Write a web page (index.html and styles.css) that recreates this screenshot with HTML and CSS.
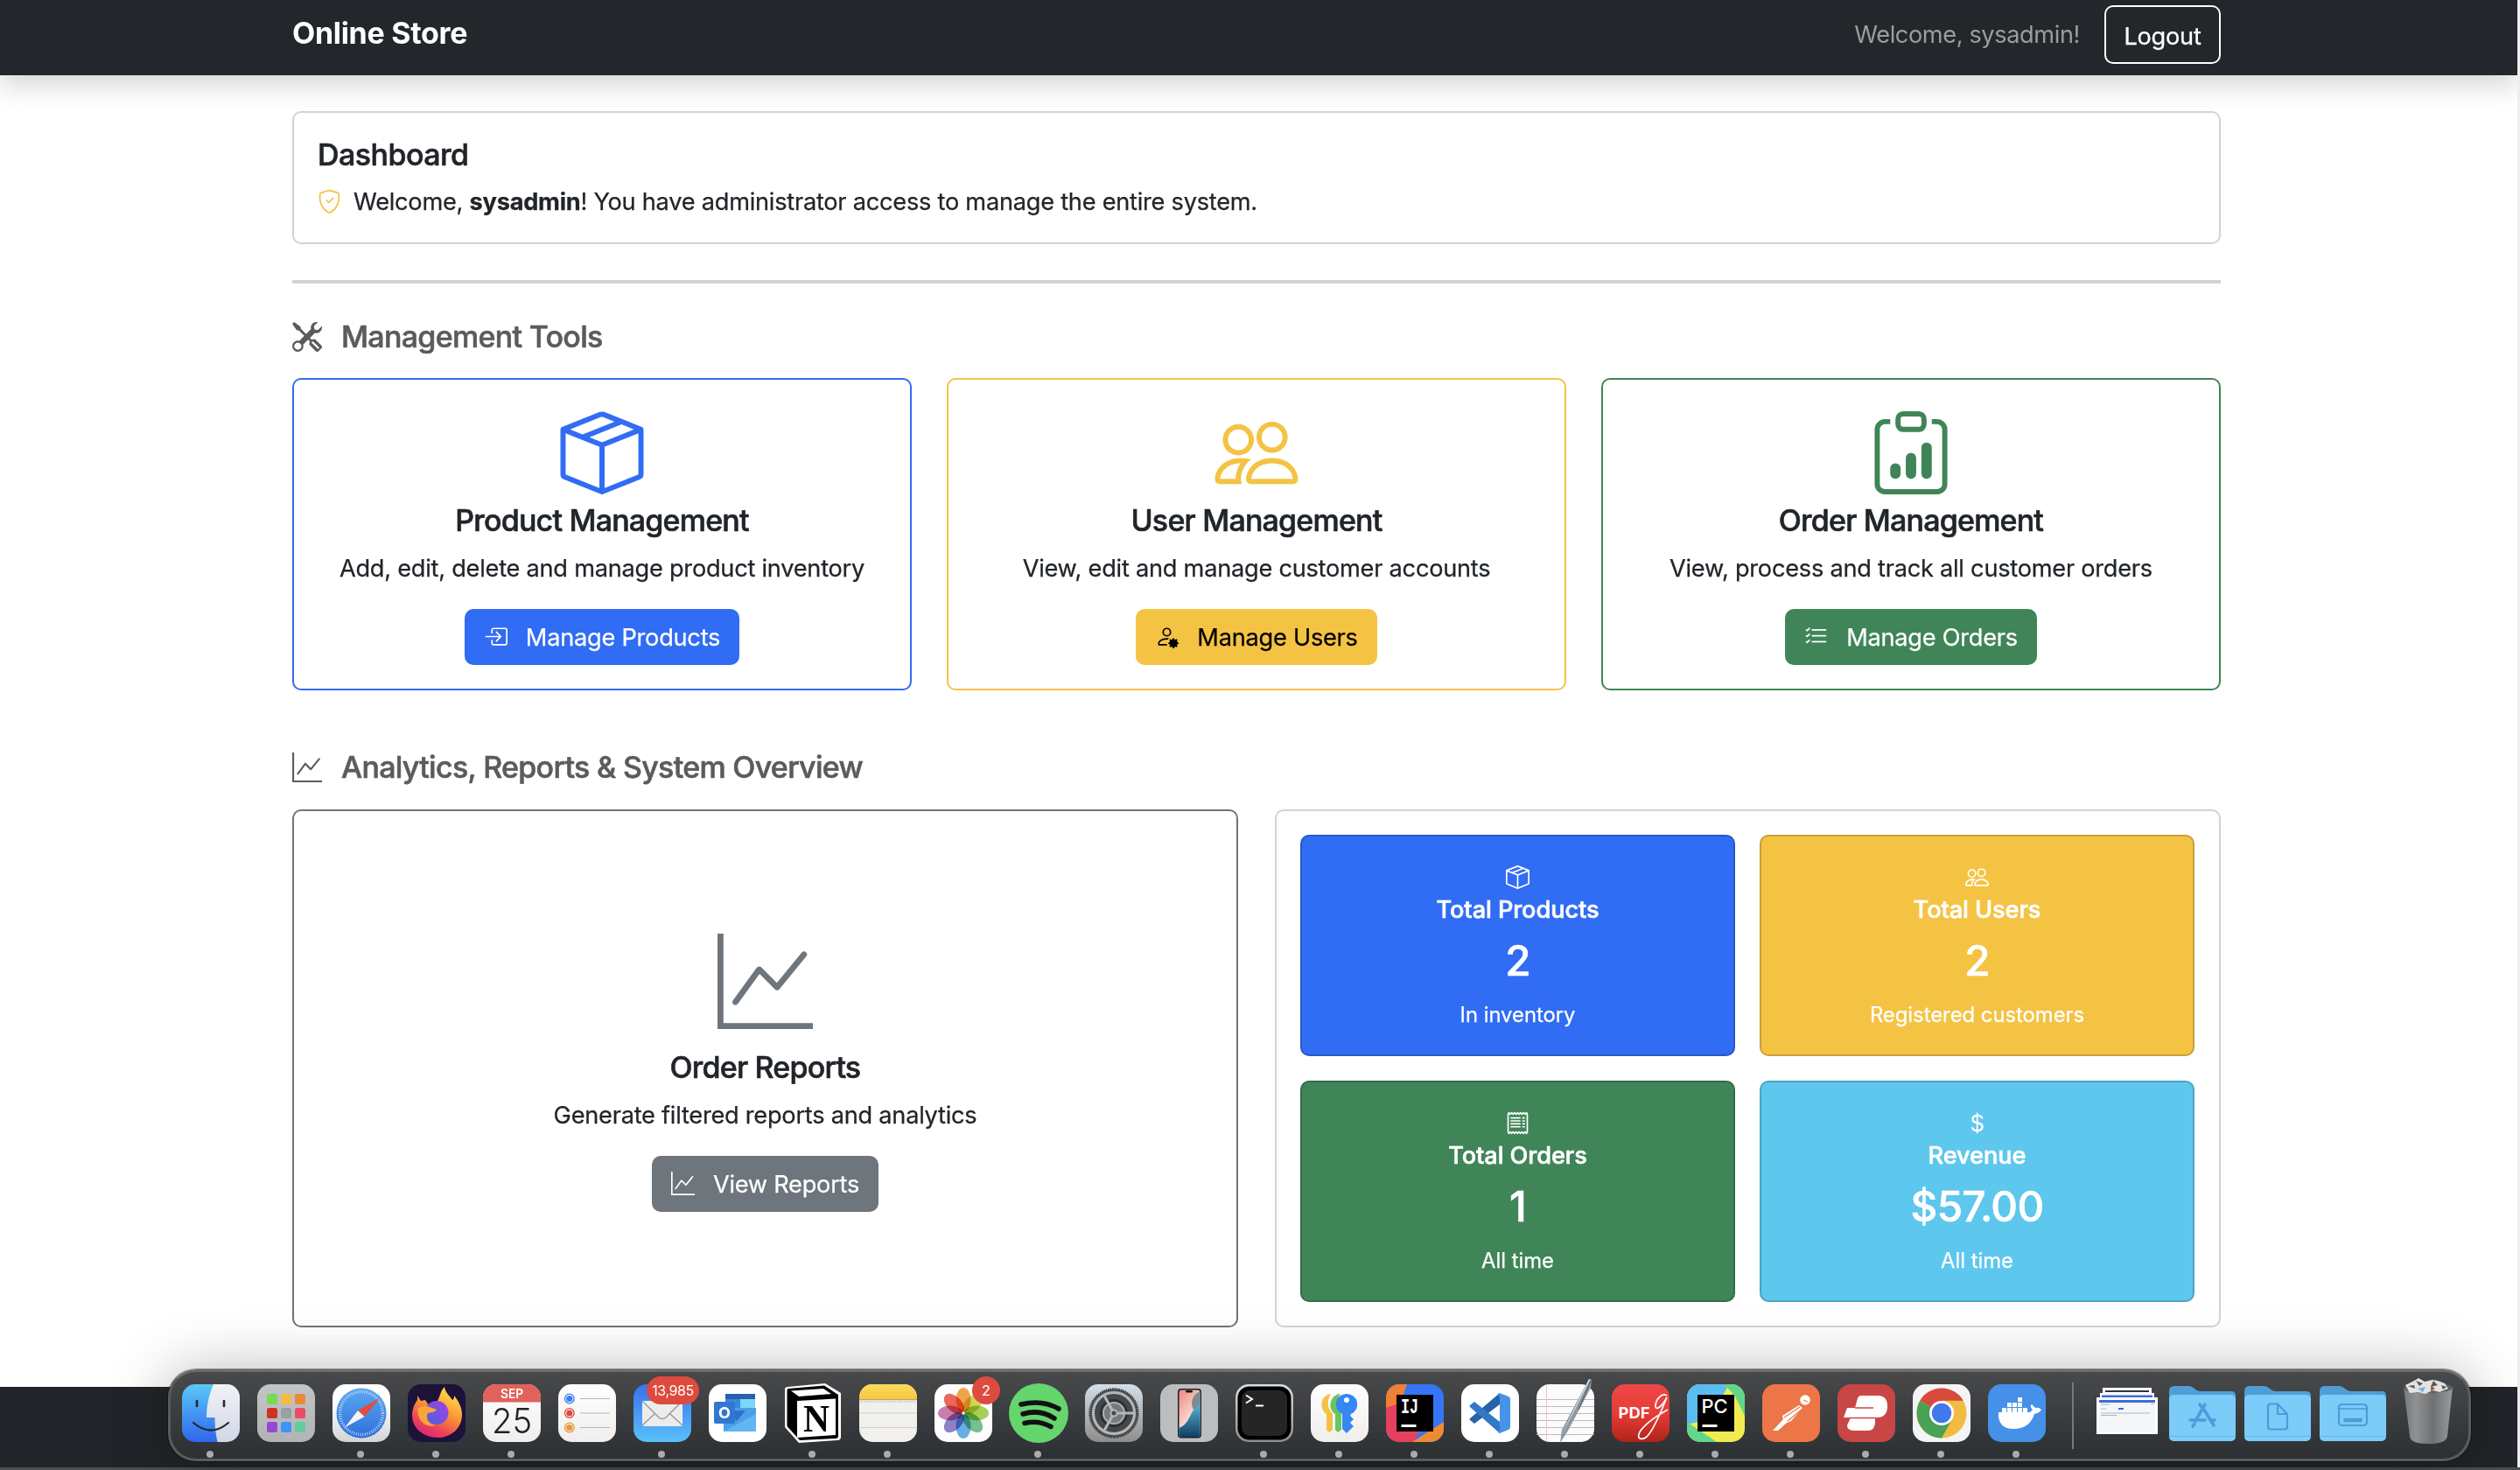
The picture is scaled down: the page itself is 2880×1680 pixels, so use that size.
FILE: index.html
```html
<!DOCTYPE html>
<html lang="en">
<head>
<meta charset="utf-8">
<title>Online Store</title>
<link rel="stylesheet" href="styles.css">
</head>
<body>
<svg class="defs" width="0" height="0" aria-hidden="true">
  <symbol id="i-box" viewBox="0 0 16 16"><path d="M8.186 1.113a.5.5 0 0 0-.372 0L1.846 3.5l2.404.961L10.404 2zm3.564 1.426L5.596 5 8 5.961 14.154 3.5zm3.25 1.7-6.5 2.6v7.922l6.5-2.6V4.24zM7.5 14.762V6.838L1 4.239v7.923zM7.443.184a1.5 1.5 0 0 1 1.114 0l7.129 2.852A.5.5 0 0 1 16 3.5v8.662a1 1 0 0 1-.629.928l-7.185 2.874a.5.5 0 0 1-.372 0L.63 13.09a1 1 0 0 1-.63-.928V3.5a.5.5 0 0 1 .314-.464z"/></symbol>
  <symbol id="i-people" viewBox="0 0 16 16"><path d="M15 14s1 0 1-1-1-4-5-4-5 3-5 4 1 1 1 1zm-7.978-1L7 12.996c.001-.264.167-1.03.76-1.72C8.312 10.629 9.282 10 11 10c1.717 0 2.687.63 3.24 1.276.593.69.758 1.457.76 1.72l-.008.002-.014.002zM11 7a2 2 0 1 0 0-4 2 2 0 0 0 0 4m3-2a3 3 0 1 1-6 0 3 3 0 0 1 6 0M6.936 9.28a6 6 0 0 0-1.23-.247A7 7 0 0 0 5 9c-4 0-5 3-5 4q0 1 1 1h4.216A2.24 2.24 0 0 1 5 13c0-1.01.377-2.042 1.09-2.904.243-.294.526-.569.846-.816M4.92 10A5.5 5.5 0 0 0 4 13H1c0-.26.164-1.03.76-1.724.545-.636 1.492-1.256 3.16-1.275ZM1.5 5.5a3 3 0 1 1 6 0 3 3 0 0 1-6 0m3-2a2 2 0 1 0 0 4 2 2 0 0 0 0-4"/></symbol>
  <symbol id="i-clip" viewBox="0 0 16 16"><path d="M4 11a1 1 0 1 1 2 0v1a1 1 0 1 1-2 0zm6-4a1 1 0 1 1 2 0v5a1 1 0 1 1-2 0zM7 9a1 1 0 0 1 2 0v3a1 1 0 1 1-2 0z"/><path d="M4 1.5H3a2 2 0 0 0-2 2V14a2 2 0 0 0 2 2h10a2 2 0 0 0 2-2V3.5a2 2 0 0 0-2-2h-1v1h1a1 1 0 0 1 1 1V14a1 1 0 0 1-1 1H3a1 1 0 0 1-1-1V3.5a1 1 0 0 1 1-1h1z"/><path d="M9.5 1a.5.5 0 0 1 .5.5v1a.5.5 0 0 1-.5.5h-3a.5.5 0 0 1-.5-.5v-1a.5.5 0 0 1 .5-.5zm-3-1A1.5 1.5 0 0 0 5 1.5v1A1.5 1.5 0 0 0 6.5 4h3A1.5 1.5 0 0 0 11 2.5v-1A1.5 1.5 0 0 0 9.5 0z"/></symbol>
  <symbol id="i-graph" viewBox="0 0 16 16"><path d="M0 0h1v15h15v1H0zm14.817 3.113a.5.5 0 0 1 .07.704l-4.5 5.5a.5.5 0 0 1-.74.037L7.06 6.767l-3.656 5.027a.5.5 0 0 1-.808-.588l4-5.5a.5.5 0 0 1 .758-.06l2.609 2.61 4.15-5.073a.5.5 0 0 1 .704-.07"/></symbol>
  <symbol id="i-shield" viewBox="0 0 16 16"><path d="M5.338 1.59a61 61 0 0 0-2.837.856.48.48 0 0 0-.328.39c-.554 4.157.726 7.19 2.253 9.188a10.7 10.7 0 0 0 2.287 2.233c.346.244.652.42.893.533q.18.085.293.118a1 1 0 0 0 .101.025 1 1 0 0 0 .1-.025q.114-.034.294-.118c.24-.113.547-.29.893-.533a10.7 10.7 0 0 0 2.287-2.233c1.527-1.997 2.807-5.031 2.253-9.188a.48.48 0 0 0-.328-.39c-.651-.213-1.75-.56-2.837-.855C9.552 1.29 8.531 1.067 8 1.067c-.53 0-1.552.223-2.662.524zM5.072.56C6.157.265 7.31 0 8 0s1.843.265 2.928.56c1.11.3 2.229.655 2.887.87a1.54 1.54 0 0 1 1.044 1.262c.596 4.477-.787 7.795-2.465 9.99a11.8 11.8 0 0 1-2.517 2.453 7 7 0 0 1-1.048.625c-.28.132-.581.24-.829.24s-.548-.108-.829-.24a7 7 0 0 1-1.048-.625 11.8 11.8 0 0 1-2.517-2.453C1.928 10.487.545 7.169 1.141 2.692A1.54 1.54 0 0 1 2.185 1.43 63 63 0 0 1 5.072.56"/><path d="M10.854 5.146a.5.5 0 0 1 0 .708l-3 3a.5.5 0 0 1-.708 0l-1.5-1.5a.5.5 0 1 1 .708-.708L7.5 7.793l2.646-2.647a.5.5 0 0 1 .708 0"/></symbol>
  <symbol id="i-tools" viewBox="0 0 16 16"><path d="M1 0 0 1l2.2 3.081a1 1 0 0 0 .815.419h.07a1 1 0 0 1 .708.293l2.675 2.675-2.617 2.654A3.003 3.003 0 0 0 0 13a3 3 0 1 0 5.878-.851l2.654-2.617.968.968-.305.914a1 1 0 0 0 .242 1.023l3.27 3.27a.997.997 0 0 0 1.414 0l1.586-1.586a.997.997 0 0 0 0-1.414l-3.27-3.27a1 1 0 0 0-1.023-.242L10.5 9.5l-.96-.96 2.68-2.643A3.005 3.005 0 0 0 16 3q0-.405-.102-.777l-2.14 2.141L12 4l-.364-1.757L13.777.102a3 3 0 0 0-3.675 3.68L7.462 6.46 4.793 3.793a1 1 0 0 1-.293-.707v-.071a1 1 0 0 0-.419-.814zm9.646 10.646a.5.5 0 0 1 .708 0l2.914 2.915a.5.5 0 0 1-.707.707l-2.915-2.914a.5.5 0 0 1 0-.708M3 11l.471.242.529.026.287.445.445.287.026.529L5 13l-.242.471-.026.529-.445.287-.287.445-.529.026L3 15l-.471-.242L2 14.732l-.287-.445L1.268 14l-.026-.529L1 13l.242-.471.026-.529.445-.287.287-.445.529-.026z"/></symbol>
  <symbol id="i-enter" viewBox="0 0 16 16"><path fill-rule="evenodd" d="M6 3.5a.5.5 0 0 1 .5-.5h8a.5.5 0 0 1 .5.5v9a.5.5 0 0 1-.5.5h-8a.5.5 0 0 1-.5-.5v-2a.5.5 0 0 0-1 0v2A1.5 1.5 0 0 0 6.500 14h8a1.500 1.500 0 0 0 1.500-1.500v-9A1.500 1.500 0 0 0 14.500 2h-8A1.500 1.500 0 0 0 5 3.500v2a.5.5 0 0 0 1 0z"/><path d="M11.854 8.354a.5.5 0 0 0 0-.708l-3-3a.5.5 0 1 0-.708.708L10.293 7.500H1.500a.5.5 0 0 0 0 1h8.793l-2.147 2.146a.5.5 0 0 0 .708.708z"/></symbol>
  <symbol id="i-gearuser" viewBox="0 0 16 16"><path d="M11 5a3 3 0 1 1-6 0 3 3 0 0 1 6 0M8 7a2 2 0 1 0 0-4 2 2 0 0 0 0 4m.256 7a4.5 4.5 0 0 1-.229-1.004H3c.001-.246.154-.986.832-1.664C4.484 10.68 5.711 10 8 10q.39 0 .74.025c.226-.341.496-.65.804-.918Q8.844 9.002 8 9c-5 0-6 3-6 4s1 1 1 1z"/><path d="M11.886 9.46c.18-.613 1.048-.613 1.229 0l.043.148a.64.64 0 0 0 .921.382l.136-.074c.561-.306 1.175.308.87.869l-.075.136a.64.64 0 0 0 .382.92l.149.045c.612.18.612 1.048 0 1.229l-.15.043a.64.64 0 0 0-.38.921l.074.136c.305.561-.309 1.175-.87.87l-.136-.075a.64.64 0 0 0-.92.382l-.045.149c-.18.612-1.048.612-1.229 0l-.043-.15a.64.64 0 0 0-.921-.38l-.136.074c-.561.305-1.175-.309-.87-.87l.075-.136a.64.64 0 0 0-.382-.92l-.148-.045c-.613-.18-.613-1.048 0-1.229l.148-.043a.64.64 0 0 0 .382-.921l-.074-.136c-.306-.561.308-1.175.869-.87l.136.075a.64.64 0 0 0 .92-.382z"/></symbol>
  <symbol id="i-list" viewBox="0 0 16 16"><path d="M5 11.500a.5.5 0 0 1 .5-.5h9a.5.5 0 0 1 0 1h-9a.5.5 0 0 1-.5-.5m0-4a.5.5 0 0 1 .5-.5h9a.5.5 0 0 1 0 1h-9a.5.5 0 0 1-.5-.5m0-4a.5.5 0 0 1 .5-.5h9a.5.5 0 0 1 0 1h-9a.5.5 0 0 1-.5-.5M3.854 2.146a.5.5 0 0 1 0 .708l-1.500 1.500a.5.5 0 0 1-.708 0l-.5-.5a.5.5 0 1 1 .708-.708L2 3.293l1.146-1.147a.5.5 0 0 1 .708 0m0 4a.5.5 0 0 1 0 .708l-1.500 1.500a.5.5 0 0 1-.708 0l-.5-.5a.5.5 0 1 1 .708-.708L2 7.293l1.146-1.147a.5.5 0 0 1 .708 0m0 4a.5.5 0 0 1 0 .708l-1.500 1.500a.5.5 0 0 1-.708 0l-.5-.5a.5.5 0 0 1 .708-.708l.146.147 1.146-1.147a.5.5 0 0 1 .708 0"/></symbol>
  <symbol id="i-receipt" viewBox="0 0 16 16"><path d="M1.92.506a.5.5 0 0 1 .434.14L3 1.293l.646-.647a.5.5 0 0 1 .708 0L5 1.293l.646-.647a.5.5 0 0 1 .708 0L7 1.293l.646-.647a.5.5 0 0 1 .708 0L9 1.293l.646-.647a.5.5 0 0 1 .708 0l.646.647.646-.647a.5.5 0 0 1 .708 0l.646.647.646-.647a.5.5 0 0 1 .801.13l.5 1A.5.5 0 0 1 15 2v12a.5.5 0 0 1-.053.224l-.5 1a.5.5 0 0 1-.8.13L13 14.707l-.646.647a.5.5 0 0 1-.708 0L11 14.707l-.646.647a.5.5 0 0 1-.708 0L9 14.707l-.646.647a.5.5 0 0 1-.708 0L7 14.707l-.646.647a.5.5 0 0 1-.708 0L5 14.707l-.646.647a.5.5 0 0 1-.708 0L3 14.707l-.646.647a.5.5 0 0 1-.801-.13l-.5-1A.5.5 0 0 1 1 14V2a.5.5 0 0 1 .053-.224l.5-1a.5.5 0 0 1 .367-.27m.217 1.338L2 2.118v11.764l.137.274.51-.51a.5.5 0 0 1 .707 0l.646.647.646-.646a.5.5 0 0 1 .708 0l.646.646.646-.646a.5.5 0 0 1 .708 0l.646.646.646-.646a.5.5 0 0 1 .708 0l.646.646.646-.646a.5.5 0 0 1 .708 0l.646.646.646-.646a.5.5 0 0 1 .708 0l.509.509.137-.274V2.118l-.137-.274-.51.51a.5.5 0 0 1-.707 0L12 1.707l-.646.647a.5.5 0 0 1-.708 0L10 1.707l-.646.647a.5.5 0 0 1-.708 0L8 1.707l-.646.647a.5.5 0 0 1-.708 0L6 1.707l-.646.647a.5.5 0 0 1-.708 0L4 1.707l-.646.647a.5.5 0 0 1-.708 0z"/><path d="M3.500 4.500h6m-6 2h6m-6 2h6m-6 2h6m2-6h1m-1 2h1m-1 2h1m-1 2h1" fill="none" stroke="currentColor" stroke-linecap="round"/></symbol>
  <symbol id="i-dollar" viewBox="0 0 16 16"><path d="M4 10.781c.148 1.667 1.513 2.85 3.591 3.003V15h1.043v-1.216c2.27-.179 3.678-1.438 3.678-3.3 0-1.59-.947-2.51-2.956-3.028l-.722-.187V3.467c1.122.11 1.879.714 2.07 1.616h1.47c-.166-1.6-1.54-2.748-3.54-2.875V1H7.591v1.233c-1.939.23-3.27 1.472-3.27 3.156 0 1.454.966 2.483 2.661 2.917l.61.162v4.031c-1.149-.17-1.94-.8-2.131-1.718zm3.391-3.836c-1.043-.263-1.6-.825-1.6-1.616 0-.944.704-1.641 1.8-1.828v3.495l-.2-.05zm1.591 1.872c1.287.323 1.852.859 1.852 1.769 0 1.097-.826 1.828-2.2 1.939V8.73z"/></symbol>
</svg>

<div class="window">
<header class="navbar">
  <div class="container navbar-row">
    <span class="brand">Online Store</span>
    <div class="navbar-end"><span class="greeting">Welcome, sysadmin!</span><button class="logout">Logout</button></div>
  </div>
</header>

<main class="container">
  <section class="welcome">
    <h1>Dashboard</h1>
    <p><svg class="icon-sm"><use href="#i-shield"/></svg><span>Welcome, <b>sysadmin</b>! You have administrator access to manage the entire system.</span></p>
  </section>
  <hr>
  <h2 class="section-title"><svg><use href="#i-tools"/></svg>Management Tools</h2>
  <div class="tools">
    <article class="tool blue">
      <svg class="tool-icon"><use href="#i-box"/></svg>
      <h3>Product Management</h3>
      <p>Add, edit, delete and manage product inventory</p>
      <button class="btn"><svg><use href="#i-enter"/></svg><span>Manage Products</span></button>
    </article>
    <article class="tool yellow">
      <svg class="tool-icon"><use href="#i-people"/></svg>
      <h3>User Management</h3>
      <p>View, edit and manage customer accounts</p>
      <button class="btn"><svg><use href="#i-gearuser"/></svg><span>Manage Users</span></button>
    </article>
    <article class="tool green">
      <svg class="tool-icon"><use href="#i-clip"/></svg>
      <h3>Order Management</h3>
      <p>View, process and track all customer orders</p>
      <button class="btn"><svg><use href="#i-list"/></svg><span>Manage Orders</span></button>
    </article>
  </div>
  <h2 class="section-title second"><svg><use href="#i-graph"/></svg>Analytics, Reports &amp; System Overview</h2>
  <div class="overview">
    <article class="tool gray report">
      <svg class="tool-icon"><use href="#i-graph"/></svg>
      <h3>Order Reports</h3>
      <p>Generate filtered reports and analytics</p>
      <button class="btn"><svg><use href="#i-graph"/></svg><span>View Reports</span></button>
    </article>
    <div class="stats">
      <div class="stat blue"><svg><use href="#i-box"/></svg><h4>Total Products</h4><strong>2</strong><small>In inventory</small></div>
      <div class="stat yellow"><svg><use href="#i-people"/></svg><h4>Total Users</h4><strong>2</strong><small>Registered customers</small></div>
      <div class="stat green"><svg><use href="#i-receipt"/></svg><h4>Total Orders</h4><strong>1</strong><small>All time</small></div>
      <div class="stat cyan"><svg><use href="#i-dollar"/></svg><h4>Revenue</h4><strong>$57.00</strong><small>All time</small></div>
    </div>
  </div>
</main>
<footer></footer>
</div>

<nav class="dock">
  <svg width="0" height="0" class="defs">
    <linearGradient id="gFinder" x2="0" y2="1"><stop stop-color="#5ac8f8"/><stop offset="1" stop-color="#2f66ec"/></linearGradient>
    <linearGradient id="gFace" x2="0" y2="1"><stop stop-color="#f3f2f4"/><stop offset="1" stop-color="#cfd8e6"/></linearGradient>
    <linearGradient id="gGray" x2="0" y2="1"><stop stop-color="#c3c4c6"/><stop offset="1" stop-color="#b2b3b5"/></linearGradient>
    <linearGradient id="gWhite" x2="0" y2="1"><stop offset=".3" stop-color="#fff"/><stop offset="1" stop-color="#d4d4d4"/></linearGradient>
    <linearGradient id="gPaper" x2="0" y2="1"><stop stop-color="#fff"/><stop offset="1" stop-color="#efeeec"/></linearGradient>
    <linearGradient id="gSafari" x2="0" y2="1"><stop stop-color="#5ba8ee"/><stop offset="1" stop-color="#2f6fdc"/></linearGradient>
    <linearGradient id="gFox" x1=".8" x2=".3" y2="1"><stop stop-color="#ffe64a"/><stop offset=".45" stop-color="#fb9a35"/><stop offset=".8" stop-color="#ee4058"/><stop offset="1" stop-color="#d4267e"/></linearGradient>
    <linearGradient id="gGlobe" x1="1" x2="0" y2="1"><stop stop-color="#a93be6"/><stop offset="1" stop-color="#4467dd"/></linearGradient>
    <linearGradient id="gMail" x2="0" y2="1"><stop stop-color="#3a6fee"/><stop offset="1" stop-color="#58c2fa"/></linearGradient>
    <linearGradient id="gNotes" x2="0" y2="1"><stop stop-color="#fbdc5f"/><stop offset="1" stop-color="#f6c53c"/></linearGradient>
    <linearGradient id="gSet" x2="0" y2="1"><stop stop-color="#d3dfe9"/><stop offset="1" stop-color="#8f8d8b"/></linearGradient>
    <linearGradient id="gPdf" x2="0" y2="1"><stop stop-color="#ef4747"/><stop offset=".5" stop-color="#e63d36"/><stop offset="1" stop-color="#b0231a"/></linearGradient>
    <linearGradient id="gPhone" x2=".6" y2="1"><stop stop-color="#ee8781"/><stop offset=".5" stop-color="#f3c6bc"/><stop offset="1" stop-color="#fff"/></linearGradient>
    <linearGradient id="gWave" x2="0" y2="1"><stop stop-color="#56b5d2"/><stop offset="1" stop-color="#123f63"/></linearGradient>
    <linearGradient id="gBin"><stop stop-color="#77797a"/><stop offset=".25" stop-color="#8f9192"/><stop offset=".6" stop-color="#6e7071"/><stop offset="1" stop-color="#9a9c9d"/></linearGradient>
    <clipPath id="sq"><rect width="66" height="66" rx="15"/></clipPath>
  </svg>
  <div class="app run"><svg viewBox="0 0 66 66"><g clip-path="url(#sq)"><path fill="url(#gFinder)" d="M0 0h66v66H0z"/><path fill="url(#gFace)" d="M36 0C31 12 28 24 28 38h9.500c0 10 1 19 3 28H66V0z"/></g><path d="M17 19v6M48 19v6" stroke="#24292e" stroke-width="2.600" stroke-linecap="round"/><path d="M13 44q20 17 40 0" fill="none" stroke="#24292e" stroke-width="2.200" stroke-linecap="round"/></svg></div>
  <div class="app"><svg viewBox="0 0 66 66"><rect width="66" height="66" rx="15" fill="url(#gGray)"/><g><rect x="11" y="11" width="12" height="12" rx="2.500" fill="#74dc50"/><rect x="27" y="11" width="12" height="12" rx="2.500" fill="#f4bb3f"/><rect x="43" y="11" width="12" height="12" rx="2.500" fill="#ea8a35"/><rect x="11" y="27" width="12" height="12" rx="2.500" fill="#cc3226"/><rect x="27" y="27" width="12" height="12" rx="2.500" fill="#98a0a5"/><rect x="43" y="27" width="12" height="12" rx="2.500" fill="#ec4c64"/><rect x="11" y="43" width="12" height="12" rx="2.500" fill="#9747d2"/><rect x="27" y="43" width="12" height="12" rx="2.500" fill="#3d93f7"/><rect x="43" y="43" width="12" height="12" rx="2.500" fill="#62cba0"/></g></svg></div>
  <div class="app run"><svg viewBox="0 0 66 66"><rect width="66" height="66" rx="15" fill="url(#gWhite)"/><circle cx="33" cy="33" r="28.500" fill="url(#gSafari)"/><circle cx="33" cy="33" r="24.500" fill="none" stroke="#d5e6fa" stroke-width="3.500" stroke-dasharray=".8 1.770"/><path d="M54 15.500 29 30l7.500 7z" fill="#e8493b"/><path d="M14 49.500 29 30l7.500 7z" fill="#f3f3f3"/></svg></div>
  <div class="app run"><svg viewBox="0 0 66 66"><rect width="66" height="66" rx="15" fill="#1d1238"/><path fill="url(#gFox)" d="M42 3c1 7 6 10 9 15 2-1 2-3 2-5 6 7 9 15 9 22 0 15-12 26-28 26S5 50 5 36c0-8 3-14 6-18v-5l4 6 5-1 4 6h5c4-1 6-7 8-12 1-4 3-7 5-9z"/><circle cx="33" cy="32.500" r="13.500" fill="url(#gGlobe)"/><path d="M11 28c4-3 9-4 14-2l8 3c-3 4-7 3-10 4-3 6 1 13 9 14-8 3-18-2-20-12z" fill="#fba43a"/></svg></div>
  <div class="app run"><svg viewBox="0 0 66 66"><g clip-path="url(#sq)"><path fill="url(#gPaper)" d="M0 0h66v66H0z"/><path fill="#e0625a" d="M0 0h66v20.500H0z"/></g><text x="33" y="16" class="ico-text" font-size="14" font-weight="600" fill="#fff" textLength="26" lengthAdjust="spacingAndGlyphs">SEP</text><text x="33" y="55.500" class="ico-text" font-size="40" font-weight="300" fill="#222" textLength="46" lengthAdjust="spacingAndGlyphs">25</text></svg></div>
  <div class="app"><svg viewBox="0 0 66 66"><rect width="66" height="66" rx="15" fill="url(#gPaper)"/><g fill="none" stroke-width="1.300"><circle cx="12.800" cy="16.500" r="5.300" stroke="#3b7cf0"/><circle cx="12.800" cy="33" r="5.300" stroke="#dd4a3c"/><circle cx="12.800" cy="49.500" r="5.300" stroke="#e8963a"/></g><circle cx="12.800" cy="16.500" r="3.600" fill="#3b7cf0"/><circle cx="12.800" cy="33" r="3.600" fill="#dd4a3c"/><circle cx="12.800" cy="49.500" r="3.600" fill="#e8963a"/><path d="M25 16.500h34M25 33h34M25 49.500h34" stroke="#b8b8ba" stroke-width="1.200"/></svg></div>
  <div class="app run"><svg viewBox="0 0 66 66"><rect width="66" height="66" rx="15" fill="url(#gMail)"/><rect x="10" y="19" width="46" height="29" rx="2" fill="#ececec"/><path d="m10 47 15-14M56 47 41 33M11 20l18 18q4 3 8 0l18-18" fill="none" stroke="#999" stroke-width="1.400"/></svg><span class="badge wide">13,985</span></div>
  <div class="app"><svg viewBox="0 0 66 66"><rect width="66" height="66" rx="15" fill="#fff"/><path fill="#2b5fae" d="M19 11h34v10H19z"/><path fill="#3a86dc" d="M19 17h17v14H19z"/><path fill="#7bd7fb" d="M36 17h17v10H36z"/><path fill="#4ba0e6" d="M17 27h37v27H17z"/><path fill="#2d71cd" d="M22 30h20l-10 12z"/><path fill="#5fb6f2" d="M54 34v20H17z"/><rect x="6" y="20" width="24" height="25" rx="2" fill="#3177d0"/><text x="18" y="39" class="ico-text" font-size="18" font-weight="700" fill="#fff">O</text></svg></div>
  <div class="app run"><svg viewBox="0 0 66 66"><path d="M4 3 47-1l18 11v50q0 4-4 4l-44 3L1 49V6q0-3 3-3z" fill="#fff"/><path d="M5 5 46 1.500 62 12v47q0 3-3 3l-41 2L3.500 48V8q0-3 1.500-3z" fill="#000"/><path d="M8 7.500 45 5l9 6-37 3z" fill="#fff"/><path d="m15 19 44-2.500V58l-44 3z" fill="#fff"/><text x="37" y="53.500" class="ico-text serif" font-size="45" font-weight="700" fill="#000" textLength="30" lengthAdjust="spacingAndGlyphs">N</text></svg></div>
  <div class="app run"><svg viewBox="0 0 66 66"><g clip-path="url(#sq)"><path fill="#f1f0ed" d="M0 0h66v66H0z"/><path fill="url(#gNotes)" d="M0 0h66v17.500H0z"/></g><path d="M0 17.700h66" stroke="#a29a82"/><path d="M1 20h64" stroke="#c2c1be" stroke-width="2" stroke-dasharray="1 1.500"/><path d="M0 33h66M0 49.500h66" stroke="#d0cfcc"/></svg></div>
  <div class="app"><svg viewBox="0 0 66 66"><rect width="66" height="66" rx="15" fill="#fdfdfd"/><g class="petals"><ellipse cx="33" cy="18" rx="8.500" ry="14" fill="#f09b38"/><ellipse cx="33" cy="18" rx="8.500" ry="14" fill="#d5ce42" transform="rotate(45 33 33)"/><ellipse cx="33" cy="18" rx="8.500" ry="14" fill="#9ecb4a" transform="rotate(90 33 33)"/><ellipse cx="33" cy="18" rx="8.500" ry="14" fill="#6db984" transform="rotate(135 33 33)"/><ellipse cx="33" cy="18" rx="8.500" ry="14" fill="#5aa7e0" transform="rotate(180 33 33)"/><ellipse cx="33" cy="18" rx="8.500" ry="14" fill="#8377bf" transform="rotate(225 33 33)"/><ellipse cx="33" cy="18" rx="8.500" ry="14" fill="#c472a8" transform="rotate(270 33 33)"/><ellipse cx="33" cy="18" rx="8.500" ry="14" fill="#e9594c" transform="rotate(315 33 33)"/></g><circle cx="33" cy="33" r="1.500" fill="#fff"/></svg><span class="badge">2</span></div>
  <div class="app run"><svg viewBox="0 0 66 66"><circle cx="33" cy="33" r="34" fill="#65d56e"/><path d="M13 23q24-6 43 5M15 34q20-6 36 5M17 44.500q16-4 30 4" fill="none" stroke="#111" stroke-width="5.500" stroke-linecap="round"/></svg></div>
  <div class="app"><svg viewBox="0 0 66 66"><rect width="66" height="66" rx="15" fill="url(#gSet)"/><circle cx="33" cy="33" r="27.500" fill="#55585a" stroke="#35383a" stroke-width="2.500" stroke-dasharray="1.500 1"/><circle cx="33" cy="33" r="23.500" fill="#45484a" stroke="#b5b8ba" stroke-width="3"/><circle cx="33" cy="33" r="14.500" fill="#77797a" stroke="#2c2e30" stroke-width="3"/><circle cx="33" cy="33" r="12" fill="none" stroke="#aaadaf" stroke-width="2"/><path d="M33 33h22M33 33 22 13M33 33 22 53" stroke="#b5b8ba" stroke-width="3"/><circle cx="33" cy="33" r="3.500" fill="#45484a" stroke="#b5b8ba" stroke-width="2"/></svg></div>
  <div class="app"><svg viewBox="0 0 66 66"><rect width="66" height="66" rx="15" fill="#bcbdbf"/><rect x="20" y="5" width="27" height="56.500" rx="4" fill="#1b1f24"/><rect x="21.500" y="6.500" width="24" height="53.500" rx="3" fill="url(#gPhone)"/><path d="M45.500 8C36 12 34 22 38 29l7.500-5z" fill="#7b8b92"/><path d="M45.500 23C32 30 36 44 21.500 50v7q0 3 3 3h18q3 0 3-3z" fill="url(#gWave)"/><rect x="29" y="7" width="8" height="2.500" rx="1.200" fill="#111"/></svg></div>
  <div class="app run"><svg viewBox="0 0 66 66"><rect width="66" height="66" rx="15" fill="url(#gSet)"/><rect x="2.500" y="2.500" width="61" height="61" rx="13" fill="#000"/><rect x="7" y="7" width="52" height="52" rx="9" fill="#252525"/><path d="m12 12.500 7 4.500-7 4.500" fill="none" stroke="#fff" stroke-width="2"/><path d="M23 24.500h9" stroke="#fff" stroke-width="2"/></svg></div>
  <div class="app run"><svg viewBox="0 0 66 66"><rect width="66" height="66" rx="15" fill="url(#gPaper)"/><path d="M23 11c-13 2-13 18-5 23v18l3 3 4-3V34c-6-6-7-15-2-23z" fill="#f3c145"/><path d="M34 11c-13 1-15 18-6 23v18l3 3 4-3V34c-6-6-6-15-1-23z" fill="#68c560"/><path d="M41 11a12 12 0 0 0-5 23v17l5 5 8-8-4-4 4-4-4-4 1-2a12 12 0 0 0-5-23z" fill="#3587f3"/><circle cx="41" cy="18" r="3" fill="#fff"/></svg></div>
  <div class="app run"><svg viewBox="0 0 66 66"><g clip-path="url(#sq)"><path fill="#3575f6" d="M0 0h66v66H0z"/><path fill="#ef7f34" d="M0 0h24L12 34 0 28z"/><path fill="#e5405f" d="m0 27 14-5 26 28-8 16H0z"/><path fill="#f08a32" d="M66 43 30 66h36z"/></g><rect x="12" y="12" width="42" height="42" fill="#000"/><text x="27" y="33" class="ico-text mono" font-size="23" font-weight="700" fill="#fff" textLength="20" lengthAdjust="spacingAndGlyphs">IJ</text><path d="M17.500 47.500h17" stroke="#fff" stroke-width="3"/></svg></div>
  <div class="app run"><svg viewBox="0 0 66 66"><rect width="66" height="66" rx="15" fill="#fff"/><path d="M44 10v13L15 45l-5-4q-1-1 0-2z" fill="#2763a8"/><path d="m15 20-5 4q-1 1 0 2l34 30V43z" fill="#3378c4"/><path d="m44 10 10 4q2 1 2 3v32q0 2-2 3l-10 4q-1 0-2-1l2-3V14l-2-3z" fill="#4594e8"/></svg></div>
  <div class="app run"><svg viewBox="0 0 66 66"><rect width="66" height="66" rx="15" fill="#fbfbfb"/><path d="M0 17.500h66M0 25.500h66M0 33.500h66M0 41.500h66M0 49.500h66M0 57.500h66" stroke="#bdbdbd"/><path d="M11.500 0v66" stroke="#eec1bb"/><path d="m60-6 3 1-1 9-26 49-9 14 2-15z" fill="#8f989f"/><path d="m60-6 1.500.5L31 54l-2 3z" fill="#d5e2ec"/><path d="m62-4-14 33" stroke="#5a6a78" stroke-width="1.500"/></svg></div>
  <div class="app run"><svg viewBox="0 0 66 66"><rect width="66" height="66" rx="15" fill="url(#gPdf)"/><text x="25.500" y="38.500" class="ico-text" font-size="17.500" font-weight="700" fill="#fff" textLength="36" lengthAdjust="spacingAndGlyphs">PDF</text><path d="M63 13c-6-4-13 5-13 12 0 6 8 0 13-10-6 14-14 36-23 45-5 4-11 3-9-3 2-7 15-18 33-28" fill="none" stroke="#fff" stroke-width="1.700"/></svg></div>
  <div class="app run"><svg viewBox="0 0 66 66"><g clip-path="url(#sq)"><path fill="#f0ec50" d="M0 0h66v66H0z"/><path fill="#5abdf0" d="M0 0h48L26 40 0 46z"/><path fill="#62d68c" d="M42 0h24v36L54 12zM0 43l34 23H0z"/></g><rect x="12" y="12" width="42" height="42" fill="#000"/><text x="31.500" y="33" class="ico-text" font-size="22" font-weight="500" fill="#fff" textLength="30" lengthAdjust="spacingAndGlyphs">PC</text><path d="M17.500 47.500h17" stroke="#fff" stroke-width="3"/></svg></div>
  <div class="app run"><svg viewBox="0 0 66 66"><rect width="66" height="66" rx="15" fill="#ed7648"/><circle cx="49" cy="18" r="5.800" fill="#fff"/><path d="m42 24 4 3-13 15-5 2-10 9h-6l12-13-1-4z" fill="#fff"/><path d="M43 26 25 38M46 28 29 42M47 18l5 2" stroke="#ed7648" stroke-width="1.100"/></svg></div>
  <div class="app run"><svg viewBox="0 0 66 66"><rect width="66" height="66" rx="15" fill="#c94646"/><path d="M27 13h19q11 0 11 12 0 13-12 13H7l4-11h9l3-11q1-3 4-3z" fill="#fff"/><path d="M15 38h28v5q0 10-9 10H20q-9 0-9-6z" fill="#fff"/><path d="M20 27h21M14 38.500h29" stroke="#c94646" stroke-width="1.500"/></svg></div>
  <div class="app run"><svg viewBox="0 0 66 66"><rect width="66" height="66" rx="15" fill="#f4f4f4"/><circle cx="33" cy="33" r="28.500" fill="#f2bb41"/><path d="M33 33 8.300 18.800A28.500 28.500 0 0 1 57.700 18.800H33z" fill="#d84a3c"/><path d="M8.300 18.800A28.500 28.500 0 0 0 33 61.500L45 40 33 33z" fill="#4ba155"/><circle cx="33" cy="33" r="14" fill="#fff"/><circle cx="33" cy="33" r="11.200" fill="#4279ea"/></svg></div>
  <div class="app run"><svg viewBox="0 0 66 66"><rect width="66" height="66" rx="15" fill="#4590e8"/><path d="M12 32h36l3-3q-4-4-1-6l4 4q4-1 7 2-2 4-8 5c-4 12-12 17-24 17-12 0-18-7-17-19z" fill="#fff"/><path d="M16 27h5v5h-5zm6 0h5v5h-5zm6 0h5v5h-5zm6 0h5v5h-5zm6 0h5v5h-5zM22 21h5v5h-5zm6 0h5v5h-5zm6 0h5v5h-5zM34 15h5v5h-5z" fill="#fff"/></svg></div>
  <span class="dock-sep"></span>
  <svg class="stack" viewBox="0 0 70 66"><g fill="#fff"><path d="M7 4h56v12H7z"/><path d="M4 10h62v12H4z"/><path d="M0 15h70v42H0z"/></g><path fill="#30343a" d="M10 7h50v2H10z"/><path fill="#3b6be0" d="M6 12.500h58V15H6zM3 18h64v3H3z"/><path fill="#f5f6f8" d="M3 21h64v34H3z"/><path fill="#3b6be0" d="M25 27h6v2h-6z"/><path d="M5 23h10M5 28h6M5 33h56M5 35.500h18M62 22.500h4" stroke="#aab4c8"/></svg>
  <svg class="folder" viewBox="0 0 76 66"><path d="M0 8q0-6 6-6h16q4 0 7 3 3 3 6 3h36q5 0 5 5v20H0z" fill="#4f9fd6"/><rect y="12" width="76" height="53" rx="5" fill="#7ccbf9"/><path d="M0 59.500h76" stroke="#67b5e6"/><path d="m35 23 5 7M41 23 30 42m10-13 11 18M24 41h17m6 0h5M29 45l-2 3" fill="none" stroke="#4d9cd8" stroke-width="3.500" stroke-linecap="round"/></svg>
  <svg class="folder" viewBox="0 0 76 66"><path d="M0 8q0-6 6-6h16q4 0 7 3 3 3 6 3h36q5 0 5 5v20H0z" fill="#4f9fd6"/><rect y="12" width="76" height="53" rx="5" fill="#7ccbf9"/><path d="M0 59.500h76" stroke="#67b5e6"/><path d="M38 22.500h-8q-3 0-3 3v23q0 3 3 3h16q3 0 3-3V34zv11.500h11" fill="none" stroke="#4d9cd8" stroke-width="2.200" stroke-linejoin="round"/></svg>
  <svg class="folder" viewBox="0 0 76 66"><path d="M0 8q0-6 6-6h16q4 0 7 3 3 3 6 3h36q5 0 5 5v20H0z" fill="#4f9fd6"/><rect y="12" width="76" height="53" rx="5" fill="#7ccbf9"/><path d="M0 59.500h76" stroke="#67b5e6"/><rect x="22" y="23" width="32" height="24" rx="3.500" fill="none" stroke="#4d9cd8" stroke-width="2.200"/><path d="M22 28h32" stroke="#4d9cd8" stroke-width="1.600"/><path d="M27.500 41h21" stroke="#4d9cd8" stroke-width="4.500"/></svg>
  <svg class="trash" viewBox="0 0 58 76"><path d="M1 10h56l-6 56q-1 9-22 9T8 66z" fill="url(#gBin)"/><ellipse cx="29" cy="11" rx="28" ry="6" fill="#5c5e60"/><path d="m3 8 10-5 5-3 7 4 9-2 6 1 8 3 4 6-10 4-8-2-8 4-9-2-9 1z" fill="#e3e3e1"/><path d="m15 3 8 3-4 3zM35 3l5 5-8 2zM6 9l7-1 1 4zM44 8l6 2-4 3z" fill="#55565a"/><path d="m17 12 9-2-3 6z" fill="#6bb6d8"/><path d="m32 8 5 4-5 3z" fill="#a5633e"/></svg>
</nav>
</body>
</html>
```
FILE: styles.css
```css
* { box-sizing: border-box; }
body {
  margin: 0;
  width: 2880px;
  height: 1680px;
  overflow: hidden;
  position: relative;
  background: #4a4e51;
  color: #212529;
  font: 400 27.2px/40.8px Inter, "Liberation Sans", sans-serif;
  letter-spacing: -.25px;
}
h1, h2, h3, h4, p { margin: 0; }
p, button, small { white-space: nowrap; -webkit-text-stroke: .25px; }
h1, h2, h3, h4, strong { -webkit-text-stroke: .6px; }
button { font: inherit; letter-spacing: inherit; margin: 0; }
.defs { position: absolute; }
svg { fill: currentColor; display: block; flex: none; }

.window {
  width: 2877px;
  height: 1677px;
  background: #fff;
  box-shadow: 3px 0 0 #eeeeef;
  display: flex;
  flex-direction: column;
  overflow: hidden;
}
.container { width: 2204px; margin: 0 auto 0 334px; }

/* top bar */
.navbar {
  height: 86px;
  flex: none;
  background: #23262a;
  box-shadow: 0 14px 27px rgba(0, 0, 0, .15);
}
.navbar-row { display: flex; justify-content: space-between; padding-top: 6px; }
.brand { font-size: 34px; font-weight: 700; color: #fff; line-height: 63px; letter-spacing: -.3px; }
.navbar-end { display: flex; gap: 28px; line-height: 67px; color: #9b9c9e; }
.greeting { letter-spacing: -.4px; }
.logout {
  width: 133px;
  height: 67px;
  border: 2px solid #fff;
  border-radius: 10px;
  background: none;
  color: #fff;
  padding: 0;
}

/* greeting card */
main { flex: none; padding-top: 41px; }
.welcome {
  height: 152px;
  border: 2px solid #d2d3d4;
  border-radius: 10px;
  padding: 27px 27px 0;
  background: #fff;
}
h1, h3 { font-size: 34px; font-weight: 500; line-height: 41px; margin-bottom: 14px; letter-spacing: -.8px; }
h1 { letter-spacing: -.55px; }
.welcome p { display: flex; align-items: center; gap: 14px; }
.icon-sm { width: 27px; height: 27px; color: #f4c344; position: relative; top: -1px; }
hr { height: 4px; border: 0; margin: 41px 0 40px; background: #d2d3d4; }

.section-title {
  display: flex;
  align-items: center;
  gap: 22px;
  height: 41px;
  font-size: 34px;
  font-weight: 500;
  line-height: 41px;
  letter-spacing: -.7px;
  color: #595c5f;
  margin-bottom: 27px;
}
.section-title svg { width: 34px; height: 34px; }
.second { margin-top: 67px; margin-bottom: 28px; }

/* coloured themes */
.blue { --c: #316cf4; }
.yellow { --c: #f4c344; }
.green { --c: #408558; }
.gray { --c: #6e757c; }
.cyan { --c: #5ec7ed; }

/* cards */
.tools { display: grid; grid-template-columns: repeat(3, 708px); gap: 40px; }
.tool {
  height: 357px;
  border: 2px solid var(--c);
  border-radius: 10px;
  padding-top: 36px;
  display: flex;
  flex-direction: column;
  align-items: center;
}
.tool-icon { width: 96px; height: 95px; color: var(--c); margin-bottom: 9px; }
.tool h3 { margin-bottom: 15px; }
.tool p { margin-bottom: 25px; }
.btn {
  height: 64px;
  padding: 0 22px;
  border: 0;
  border-radius: 10px;
  background: var(--c);
  color: #fff;
  display: flex;
  align-items: center;
  gap: 21px;
}
.btn span { padding-top: 3px; }
.yellow .btn { color: #000; }
.btn svg { width: 27px; height: 27px; }

.overview { display: grid; grid-template-columns: 1081px 1081px; gap: 42px; }
.report { height: 592px; padding-top: 140px; }
.report .tool-icon { width: 109px; height: 109px; margin-bottom: 23px; }
.stats {
  height: 592px;
  border: 2px solid #d2d3d4;
  border-radius: 10px;
  padding: 27px;
  display: grid;
  grid-template: 253px 253px / 497px 497px;
  gap: 28px;
}
.stat {
  background: var(--c);
  border: 2px solid rgba(0, 0, 0, .175);
  border-radius: 10px;
  color: #fff;
  display: flex;
  flex-direction: column;
  align-items: center;
  padding-top: 33px;
}
.stat svg { width: 27px; height: 27px; margin-bottom: 7px; }
.stat h4 { font-size: 27.2px; font-weight: 500; line-height: 33px; margin-bottom: 13px; letter-spacing: -.1px; }
.stat strong { font-size: 47.6px; font-weight: 500; line-height: 57px; margin-bottom: 13px; letter-spacing: -.7px; }
.stat small { font-size: 23.8px; line-height: 41px; letter-spacing: 0; }
footer { flex: 1; margin-top: 68px; background: #212529; }

/* dock, floating over the window */
.dock {
  position: absolute;
  left: 192px;
  top: 1565px;
  width: 2632px;
  height: 105px;
  border: 3px solid #595c5e;
  border-top-color: #696b6c;
  border-radius: 32px;
  background: linear-gradient(#48494b, #2c3033);
  box-shadow: 0 0 0 1px rgba(0, 0, 0, .4), 0 4px 70px rgba(0, 0, 0, .3);
  display: flex;
  align-items: flex-start;
  padding: 14px 0 0 13px;
  letter-spacing: 0;
}
.dock svg { overflow: visible; }
.app { position: relative; width: 66px; height: 84px; margin-right: 20px; flex: none; }
.app > svg { width: 66px; height: 66px; }
.run::after {
  content: "";
  position: absolute;
  left: 28px;
  top: 76px;
  width: 8px;
  height: 8px;
  border-radius: 50%;
  background: #a9abad;
}
.ico-text { text-anchor: middle; }
.serif { font-family: "Liberation Serif", serif; }
.mono { font-family: "Liberation Mono", monospace; }
.petals ellipse { mix-blend-mode: multiply; opacity: .9; }
.badge {
  position: absolute;
  left: 43px;
  top: -9px;
  width: 32px;
  height: 32px;
  border-radius: 16px;
  background: #dc4b3e;
  color: #fff;
  font-size: 16px;
  line-height: 32px;
  text-align: center;
}
.badge.wide { left: 15px; width: 60px; letter-spacing: -.4px; }
.dock-sep { width: 2px; height: 76px; margin: -2px 26px 0 10px; background: #76797b; }
.stack { width: 70px; height: 66px; margin-right: 13px; }
.folder { width: 76px; height: 66px; margin-right: 10px; }
.trash { width: 58px; height: 76px; margin: -7px 0 0 9px; }
```
